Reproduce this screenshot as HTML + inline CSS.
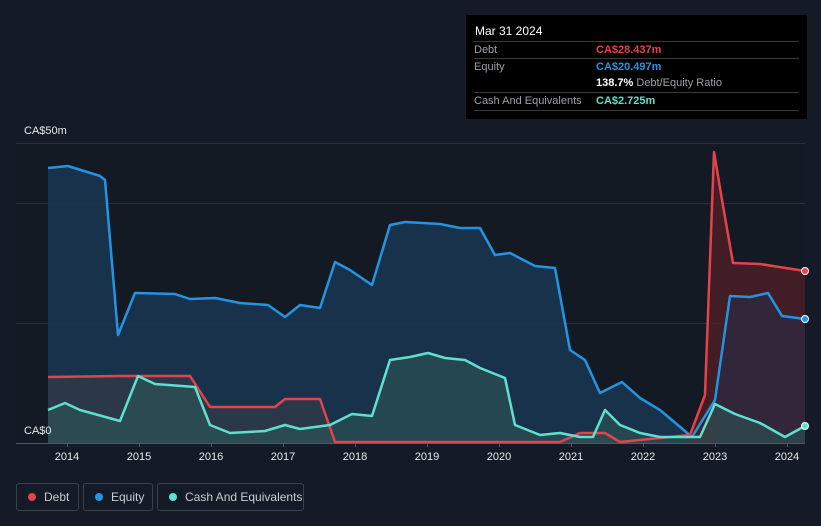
<!DOCTYPE html>
<html><head><style>
body{margin:0;width:821px;height:526px;background:#151b26;font-family:"Liberation Sans",sans-serif;overflow:hidden;position:relative}
.tt{position:absolute;left:466px;top:15px;width:341px;height:104px;background:#000;color:#fff;font-size:11px}
.tt .r{position:absolute;left:8px;right:8px;border-top:1px solid #3a3a3a;height:17px;line-height:17px;color:#9aa0a6}
.tt .v{position:absolute;left:122px}
.lg{position:absolute;top:483px;height:26px;border:1px solid #3a414d;border-radius:3px;color:#c8ccd2;font-size:12px;line-height:26px}
.lg i{position:absolute;left:11px;top:9px;width:8px;height:8px;border-radius:50%}
.lg span{position:absolute;left:27px}
.ax{position:absolute;top:451px;color:#e6e8eb;font-size:11px;width:40px;margin-left:-20px;text-align:center}
</style></head><body>
<svg width="821" height="526" style="position:absolute;left:0;top:0">
<rect x="16" y="143" width="789" height="300" fill="#141a23"/>
<g stroke="#2a313c" stroke-width="1">
<line x1="16" y1="143.5" x2="805" y2="143.5"/><line x1="16" y1="203.5" x2="805" y2="203.5"/><line x1="16" y1="323.5" x2="805" y2="323.5"/>
<line x1="16" y1="443.5" x2="805" y2="443.5" stroke="#505866"/>
</g>
<polygon fill="#1a3550" fill-opacity="0.9" points="48,443 48,168 68,166 100,176 105,180 118,335 135,293 175,294 190,299 215,298 240,303 268,305 285,317 300,305 320,308 335,262 350,270 372,285 390,225 405,222 440,224 460,228 480,228 495,255 510,253 535,266 555,268 570,350 585,360 600,393 622,382 640,398 660,410 692,437 715,400 730,296 750,297 768,293 782,316 805,319 805,443"/>
<polygon fill="#4a1f27" fill-opacity="0.85" points="690,443 690,435 705,395 714,152 722,200 733,263 760,264 805,271 805,443"/>
<polygon fill="#2e3a48" fill-opacity="0.8" points="48,443 48,377 120,376 190,376 210,407 275,407 285,399 320,399 335,442 560,442 580,433 605,433 620,442 690,443"/>
<polygon fill="#2c2a40" fill-opacity="0.7" points="715,443 715,400 730,296 750,297 768,293 782,316 805,319 805,443"/>
<polygon fill="#2d5a5a" fill-opacity="0.55" points="48,443 48,410 65,403 80,410 120,421 138,376 155,384 195,387 210,425 230,433 265,431 285,425 300,429 330,425 352,414 372,416 390,360 410,357 428,353 445,358 465,360 480,368 505,378 515,425 540,435 560,433 580,437 593,437 605,410 620,425 640,433 660,437 700,437 715,404 735,414 760,423 785,437 805,426 805,443"/>
<g fill="none" stroke-width="2.5" stroke-linejoin="round">
<polyline stroke="#2394e0" points="48,168 68,166 100,176 105,180 118,335 135,293 175,294 190,299 215,298 240,303 268,305 285,317 300,305 320,308 335,262 350,270 372,285 390,225 405,222 440,224 460,228 480,228 495,255 510,253 535,266 555,268 570,350 585,360 600,393 622,382 640,398 660,410 692,437 715,400 730,296 750,297 768,293 782,316 805,319"/>
<polyline stroke="#e3434b" points="48,377 120,376 190,376 210,407 275,407 285,399 320,399 335,442 560,442 580,433 605,433 620,442 690,435 705,395 714,152 722,200 733,263 760,264 805,271"/>
<polyline stroke="#5fe0cf" points="48,410 65,403 80,410 120,421 138,376 155,384 195,387 210,425 230,433 265,431 285,425 300,429 330,425 352,414 372,416 390,360 410,357 428,353 445,358 465,360 480,368 505,378 515,425 540,435 560,433 580,437 593,437 605,410 620,425 640,433 660,437 700,437 715,404 735,414 760,423 785,437 805,426"/>
</g>
<circle cx="805" cy="271" r="3.5" fill="#e3434b" stroke="#fff" stroke-width="1"/>
<circle cx="805" cy="319" r="3.5" fill="#2394e0" stroke="#fff" stroke-width="1"/>
<circle cx="805" cy="426" r="3.5" fill="#5fe0cf" stroke="#fff" stroke-width="1"/>
<g stroke="#505866"><line x1="67.5" y1="443" x2="67.5" y2="447"/><line x1="139.5" y1="443" x2="139.5" y2="447"/><line x1="211.5" y1="443" x2="211.5" y2="447"/><line x1="283.5" y1="443" x2="283.5" y2="447"/><line x1="355.5" y1="443" x2="355.5" y2="447"/><line x1="427.5" y1="443" x2="427.5" y2="447"/><line x1="499.5" y1="443" x2="499.5" y2="447"/><line x1="571.5" y1="443" x2="571.5" y2="447"/><line x1="643.5" y1="443" x2="643.5" y2="447"/><line x1="715.5" y1="443" x2="715.5" y2="447"/><line x1="787.5" y1="443" x2="787.5" y2="447"/></g>
</svg>
<div style="position:absolute;left:24px;top:125px;color:#e6e8eb;font-size:11px">CA$50m</div>
<div style="position:absolute;left:24px;top:425px;color:#e6e8eb;font-size:11px">CA$0</div>
<div class="ax" style="left:67px">2014</div><div class="ax" style="left:139px">2015</div><div class="ax" style="left:211px">2016</div><div class="ax" style="left:283px">2017</div><div class="ax" style="left:355px">2018</div><div class="ax" style="left:427px">2019</div><div class="ax" style="left:499px">2020</div><div class="ax" style="left:571px">2021</div><div class="ax" style="left:643px">2022</div><div class="ax" style="left:715px">2023</div><div class="ax" style="left:787px">2024</div>
<div class="tt">
<div style="position:absolute;left:9px;top:9px;font-size:12px">Mar 31 2024</div>
<div class="r" style="top:26px">Debt<span class="v" style="color:#e3434b;font-weight:bold">CA$28.437m</span></div>
<div class="r" style="top:43px">Equity<span class="v" style="color:#2394e0;font-weight:bold">CA$20.497m</span></div>
<div class="r" style="top:60px;border-top:none"><span class="v"><b style="color:#fff">138.7%</b> Debt/Equity Ratio</span></div>
<div class="r" style="top:77px;border-bottom:1px solid #3a3a3a">Cash And Equivalents<span class="v" style="color:#5fe0cf;font-weight:bold">CA$2.725m</span></div>
</div>
<div class="lg" style="left:16px;width:61px"><i style="background:#e3434b"></i><span>Debt</span></div>
<div class="lg" style="left:83px;width:68px"><i style="background:#2394e0"></i><span>Equity</span></div>
<div class="lg" style="left:157px;width:145px"><i style="background:#5fe0cf"></i><span>Cash And Equivalents</span></div>
</body></html>
